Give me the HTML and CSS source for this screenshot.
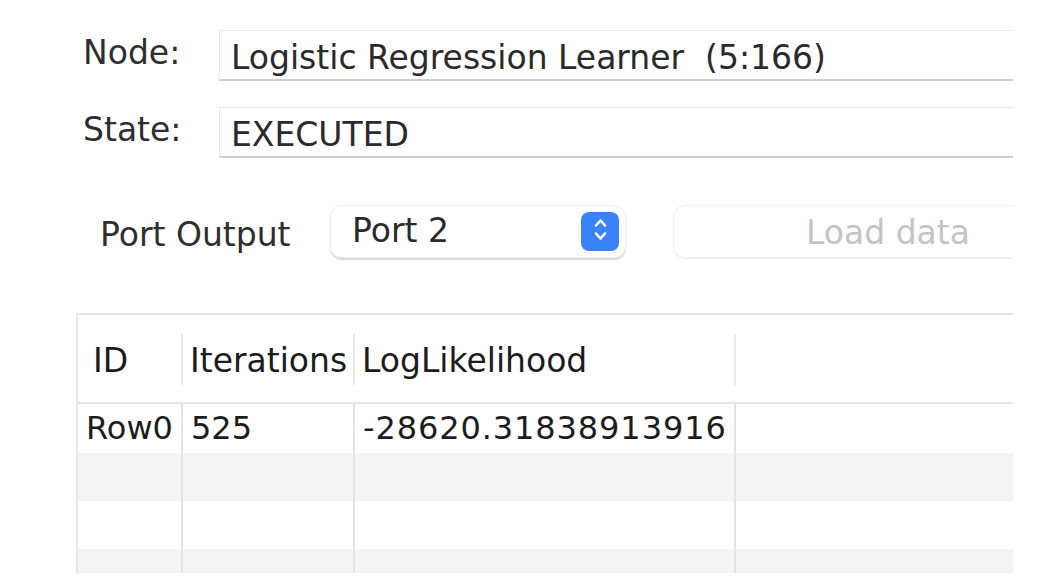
FILE: index.html
```html
<!DOCTYPE html>
<html>
<head>
<meta charset="utf-8">
<link rel="stylesheet" href="styles.css">
</head>
<body>
<div class="viewport">
  <div class="info">
    <div class="info-row">
      <span class="info-label">Node:</span>
      <div class="field">Logistic Regression Learner  (5:166)</div>
    </div>
    <div class="info-row">
      <span class="info-label">State:</span>
      <div class="field">EXECUTED</div>
    </div>
  </div>
  <div class="port-row">
    <span class="port-label">Port Output</span>
    <div class="select">
      <span class="select-text">Port 2</span>
      <span class="stepper">
        <svg width="38" height="39" viewBox="0 0 38 39"><path d="M15 13.5 L19.5 8.5 L24 13.5 M15 21.5 L19.5 26.5 L24 21.5" fill="none" stroke="#fff" stroke-width="2.6" stroke-linecap="round" stroke-linejoin="round"/></svg>
      </span>
    </div>
    <div class="button">Load data</div>
  </div>
  <div class="table-wrap">
    <div class="thead">
      <div class="th c1 first">ID</div>
      <div class="th c2">Iterations</div>
      <div class="th c3">LogLikelihood</div>
      <div class="th c4"></div>
    </div>
    <div class="tbody">
      <div class="tr r0">
        <div class="td c1">Row0</div>
        <div class="td c2">525</div>
        <div class="td c3 num">-28620.31838913916</div>
        <div class="td c4"></div>
      </div>
      <div class="tr stripe">
        <div class="td c1"></div><div class="td c2"></div><div class="td c3"></div><div class="td c4"></div>
      </div>
      <div class="tr">
        <div class="td c1"></div><div class="td c2"></div><div class="td c3"></div><div class="td c4"></div>
      </div>
      <div class="tr stripe">
        <div class="td c1"></div><div class="td c2"></div><div class="td c3"></div><div class="td c4"></div>
      </div>
    </div>
  </div>
</div>
</body>
</html>
```
FILE: styles.css
```css
html, body {
  margin: 0;
  padding: 0;
  background: #ffffff;
}
body {
  font-family: "DejaVu Sans", "Liberation Sans", sans-serif;
  color: #2e2e2e;
}
.viewport {
  width: 1013px;
  height: 582px;
  overflow: hidden;
}
.info {
  display: flex;
  flex-direction: column;
  gap: 24px;
  padding: 29px 0 0 83px;
}
.info-row {
  display: flex;
  align-items: center;
  height: 53px;
}
.info-label {
  width: 136px;
  flex: none;
  font-size: 33px;
  line-height: 40px;
  padding-bottom: 6px;
}
.field {
  flex: none;
  width: 1000px;
  height: 51px;
  box-sizing: border-box;
  border-top: 1px solid #e9e9e9;
  border-left: 1px solid #e9e9e9;
  border-bottom: 2px solid #cfcfcf;
  padding-left: 11px;
  font-size: 33px;
  line-height: 54px;
  white-space: pre;
  color: #2a2a2a;
}
.port-row {
  display: flex;
  align-items: center;
  padding: 46px 0 0 100px;
  height: 53px;
}
.port-label {
  font-size: 33px;
  line-height: 40px;
  margin-top: 6px;
  width: 230px;
  flex: none;
}
.select {
  flex: none;
  width: 296px;
  height: 53px;
  box-sizing: border-box;
  border: 1px solid #ececec;
  border-radius: 12px;
  box-shadow: 0 1.5px 1.5px rgba(0,0,0,0.16);
  display: flex;
  align-items: center;
  justify-content: space-between;
  padding: 0 6px 0 21px;
}
.select-text {
  font-size: 33px;
  line-height: 40px;
  color: #2a2a2a;
  margin-top: -1px;
}
.stepper {
  width: 38px;
  height: 39px;
  border-radius: 8px;
  background: #3a82f7;
  display: flex;
}
.button {
  flex: none;
  margin-left: 47px;
  width: 430px;
  height: 53px;
  box-sizing: border-box;
  border: 1px solid #efefef;
  border-radius: 12px;
  box-shadow: 0 1px 1px rgba(0,0,0,0.06);
  font-size: 33px;
  line-height: 53px;
  text-align: center;
  color: #c4c4c4;
}
.table-wrap {
  margin: 55px 0 0 76px;
  height: 258px;
  overflow: hidden;
  border-top: 2px solid #e7e7e7;
  border-left: 2px solid #e7e7e7;
  font-size: 32px;
  color: #1c1c1c;
}
.thead {
  display: flex;
  height: 87px;
  border-bottom: 2px solid #e4e4e4;
  align-items: center;
  font-size: 33px;
}
.c1 { width: 105px; flex: none; }
.c2 { width: 172px; flex: none; }
.c3 { width: 381px; flex: none; }
.c4 { flex: 1; }
.th {
  box-sizing: border-box;
  height: 51px;
  line-height: 54px;
  padding-left: 7px;
  border-right: 2px solid #ebebeb;
  margin-top: 2px;
}
.th.first { padding-left: 15px; }
.th.c4 { border-right: none; }
.tr {
  display: flex;
  height: 48px;
}
.tr.r0 { height: 49px; }
.tr.stripe { background: #f4f4f4; }
.td {
  box-sizing: border-box;
  height: 100%;
  line-height: 48px;
  padding-left: 8px;
  border-right: 2px solid #e3e3e3;
  white-space: nowrap;
}
.td.num { letter-spacing: 0.9px; }
.td.c4 { border-right: none; }
```
